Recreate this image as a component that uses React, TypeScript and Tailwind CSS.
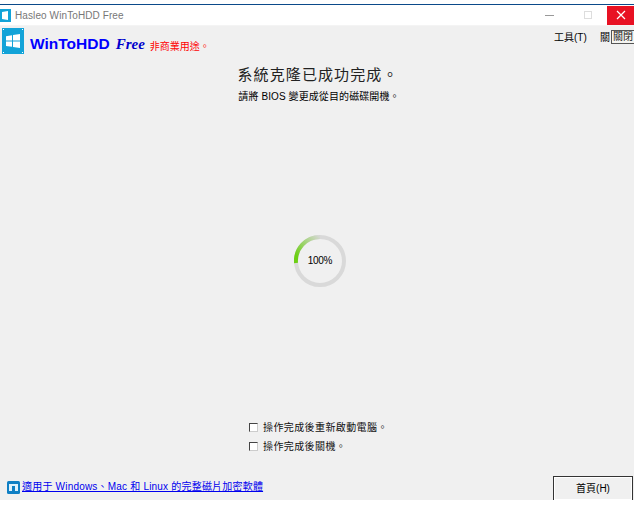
const cjk = "font-['Liberation_Sans','Noto_Sans_CJK_TC',sans-serif]";

function AppLogo() {
  return (
    <svg width="22" height="26" viewBox="0 0 22 26" className="shrink-0">
      <rect width="22" height="26" fill="#12a3d8" />
      <rect x="1" y="1" width="1" height="1" fill="#fff" />
      <rect x="20" y="1" width="1" height="1" fill="#fff" />
      <rect x="1" y="24" width="1" height="1" fill="#fff" />
      <rect x="20" y="24" width="1" height="1" fill="#fff" />
      <path d="M4 8.2l6-.9v5.3H4zM11 7.1l7-1.1v6.6h-7zM4 13.6h6v5.2l-6-.9zM11 13.6h7V20l-7-1.1z" fill="#fff" />
    </svg>
  );
}

function Progress() {
  return (
    <div className="relative flex h-[52px] w-[52px] items-center justify-center">
      <svg width="52" height="52" viewBox="0 0 52 52" className="absolute inset-0">
        <defs>
          <linearGradient id="arc" x1="0" y1="1" x2="1" y2="0">
            <stop offset="0.15" stopColor="#6ccf14" />
            <stop offset="1" stopColor="#d6d8d4" />
          </linearGradient>
        </defs>
        <circle cx="26" cy="26" r="24" fill="none" stroke="#d9d9d9" strokeWidth="4" />
        <path d="M2 28 A24 24 0 0 1 26 2" fill="none" stroke="url(#arc)" strokeWidth="4" />
      </svg>
      <span className="relative text-[10px] leading-none tracking-[-0.3px] text-black">100%</span>
    </div>
  );
}

function Check({ label }: { label: string }) {
  return (
    <div className="flex h-[19px] items-center gap-[5px]">
      <span className="h-[9px] w-[9px] border border-l-[#444] border-t-[#444] border-r-[#ccc] border-b-[#ccc] bg-white" />
      <span className="text-[10px] tracking-[0.4px] text-[#111]">{label}</span>
    </div>
  );
}

export default function App() {
  return (
    <div className={`h-[505px] w-[638px] overflow-hidden bg-white pt-1 ${cjk}`}>
      <div className="flex h-[496px] w-[634px] flex-col overflow-hidden border-t border-[#0b4a8a] bg-[#f0f0f0]">
        <div className="flex h-[20px] items-center bg-white">
          <div className="flex w-[11px] justify-start overflow-hidden">
            <svg width="11" height="13" viewBox="0 0 11 13">
              <rect width="11" height="13" fill="#12a3d8" />
              <path d="M2 3l6-1v9l-6-1z" fill="#fff" />
            </svg>
          </div>
          <span className="ml-[4px] text-[10px] tracking-[0.1px] text-[#777]">Hasleo WinToHDD Free</span>
          <div className="ml-auto flex h-full items-center">
            <span className="mr-[30px] h-px w-[9px] bg-[#999]" />
            <span className="mr-[15px] h-[8px] w-[8px] border border-[#ddd]" />
            <div className="flex h-[19px] w-[27px] items-center justify-center bg-[#e81123]">
              <svg width="10" height="10" viewBox="0 0 10 10">
                <path d="M1 1l8 8M9 1l-8 8" stroke="#fff" strokeWidth="1.2" />
              </svg>
            </div>
          </div>
        </div>

        <div className="relative flex h-[29px] border-t border-[#f4f4f4]">
          <div className="ml-[2px] mt-[2px]">
            <AppLogo />
          </div>
          <span className="ml-[6px] mt-[8px] text-[15.5px] font-bold leading-[20px] text-[#0000ff]">WinToHDD</span>
          <span className="ml-[6px] mt-[10px] font-['Liberation_Serif','Noto_Sans_CJK_TC',serif] text-[15px] font-bold italic leading-[17px] text-[#0000cc]">Free</span>
          <span className="ml-[5px] mt-[14px] text-[10px] leading-[13px] text-[#ff0000]">非商業用途。</span>
          <span className="absolute left-[554px] top-[5px] text-[10px] leading-[13px] text-black">工具(T)</span>
          <span className="absolute left-[600px] top-[5px] text-[10px] leading-[13px] text-black">關</span>
          <span className="absolute left-[611px] top-[4px] whitespace-nowrap border border-[#555] bg-[#f4f4f0] px-[1px] text-[10px] leading-[12px] text-[#222]">關閉</span>
        </div>

        <div className="flex flex-1 flex-col items-center">
          <h1 className="ml-[2px] mt-[11px] text-[15px] font-normal leading-[20px] tracking-[1.1px] text-[#222]">系統克隆已成功完成。</h1>
          <p className="ml-[4px] mt-[5px] text-[10px] leading-[13px] tracking-[0.1px] text-black">請將 BIOS 變更成從目的磁碟開機。</p>
          <div className="ml-[6px] mt-[132px]">
            <Progress />
          </div>
          <div className="ml-[4px] mt-[131px] flex w-[140px] flex-col">
            <Check label="操作完成後重新啟動電腦。" />
            <Check label="操作完成後關機。" />
          </div>
        </div>

        <div className="flex h-[24px] items-start justify-between pl-[7px] pr-[1px]">
          <div className="mt-[4px] flex items-center gap-[2px]">
            <svg width="13" height="13" viewBox="0 0 13 13">
              <rect width="13" height="13" rx="1.5" fill="#0f7fc4" />
              <rect x="2" y="3" width="9" height="7" fill="#dff1fb" />
              <rect x="5" y="5" width="3" height="5" fill="#0f7fc4" />
            </svg>
            <a href="#" className="text-[10px] leading-[14px] tracking-[0.2px] text-[#0000ee] underline">適用于 Windows、Mac 和 Linux 的完整磁片加密軟體</a>
          </div>
          <button type="button" className="flex h-[24px] w-[80px] items-center justify-center border border-[#333] border-b-0 bg-[#f0f0f0] text-[10px] text-black shadow-[inset_0_0_0_1px_#fff]">
            首頁(H)
          </button>
        </div>
      </div>
    </div>
  );
}
